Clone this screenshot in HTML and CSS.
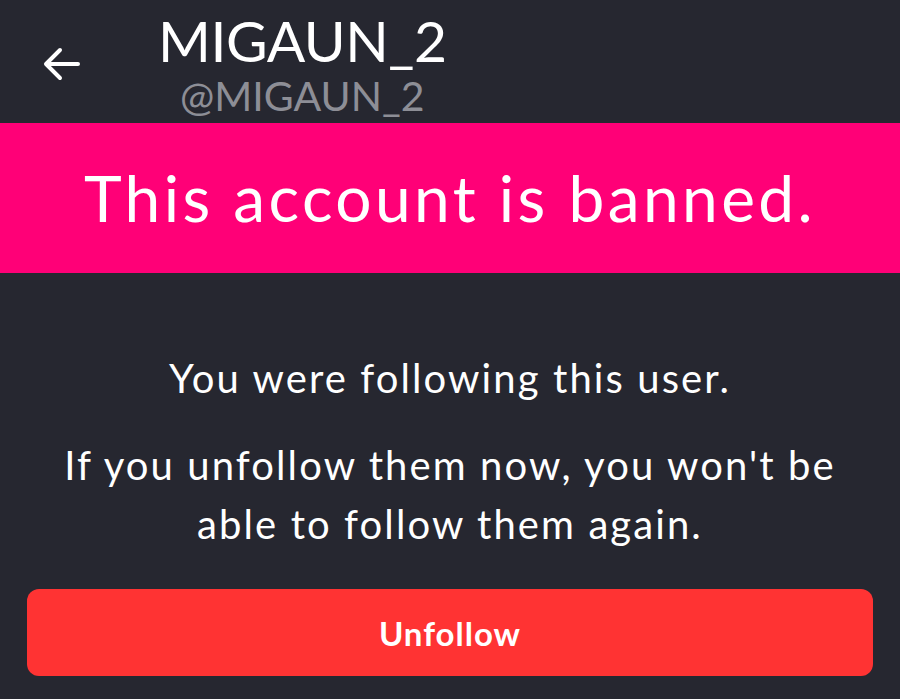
FILE: index.html
```html
<!DOCTYPE html>
<html>
<head>
<meta charset="utf-8">
<link rel="stylesheet" href="styles.css">
</head>
<body>
<div class="page">
  <header class="topbar">
    <div class="back">
      <svg width="40" height="34" viewBox="0 0 40 34"><path d="M36 17 H5 M18 3 L4 17 L18 31" fill="none" stroke="#fff" stroke-width="4" stroke-linecap="round" stroke-linejoin="round"/></svg>
    </div>
    <div class="names">
      <div class="name">MIGAUN_2</div>
      <div class="handle">@MIGAUN_2</div>
    </div>
  </header>
  <div class="banner">This account is banned.</div>
  <section class="msg">
    <p class="line1">You were following this user.</p>
    <p class="line2">If you unfollow them now, you won't be able to follow them again.</p>
  </section>
  <div class="actions">
    <button class="unfollow">Unfollow</button>
  </div>
</div>
</body>
</html>
```
FILE: styles.css
```css
html, body { margin: 0; padding: 0; }
body { background: #262730; font-family: "Lato", "Noto Sans", sans-serif; color: #fff; width: 900px; height: 699px; overflow: hidden; }
.page { display: flex; flex-direction: column; }
.topbar { height: 123px; display: flex; align-items: flex-start; }
.back { width: 40px; margin: 47px 0 0 42px; }
.back svg { display: block; }
.names { margin-left: 76px; display: flex; flex-direction: column; align-items: center; }
.name { font-size: 57px; line-height: 76px; margin-top: 2px; letter-spacing: -0.5px; }
.handle { font-size: 41px; line-height: 38px; color: #8d8e96; margin-top: -1px; }
.banner { background: #ff0077; height: 150px; display: flex; align-items: center; justify-content: center; font-size: 64px; letter-spacing: 3.4px; padding-bottom: 2px; box-sizing: border-box; }
.msg { text-align: center; padding: 76px 50px 0; font-size: 40px; line-height: 59px; letter-spacing: 2.1px; }
.msg p { margin: 0; }
.line2 { margin-top: 28px !important; }
.actions { padding: 35px 27px 0; }
.unfollow { width: 100%; height: 87px; border: none; border-radius: 12px; background: #ff3333; color: #fff; font-family: "Lato", sans-serif; font-weight: 700; font-size: 33px; letter-spacing: 1px; }
```
